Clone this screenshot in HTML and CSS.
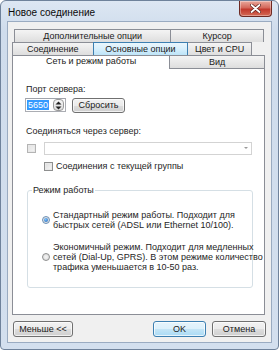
FILE: index.html
```html
<!DOCTYPE html>
<html lang="ru">
<head>
<meta charset="utf-8">
<link rel="stylesheet" href="styles.css">
</head>
<body>
<div class="window">
  <div class="titlebar">
    <span class="title">Новое соединение</span>
    <div class="close">
      <svg width="11" height="9" viewBox="0 0 11 9"><path d="M1.5 1 L9.5 8 M9.5 1 L1.5 8" stroke="#5a1e18" stroke-width="3.2" stroke-linecap="round"/><path d="M1.5 1 L9.5 8 M9.5 1 L1.5 8" stroke="#fff" stroke-width="1.8" stroke-linecap="round"/></svg>
    </div>
  </div>
  <div class="client">
    <div class="tabs">
      <div class="tabrow row1">
        <div class="tab w-t1">Дополнительные опции</div>
        <div class="tab w-t2">Курсор</div>
      </div>
      <div class="tabrow row2">
        <div class="tab w-t3">Соединение</div>
        <div class="tab hover w-t4">Основные опции</div>
        <div class="tab w-t5">Цвет и CPU</div>
      </div>
      <div class="tabrow row3">
        <div class="tab selected w-t6">Сеть и режим работы</div>
        <div class="tab w-t7">Вид</div>
      </div>
    </div>
    <div class="panel">
      <div class="label">Порт сервера:</div>
      <div class="portrow">
        <div class="spinedit">
          <span class="seltext">5650</span>
          <div class="spin">
            <svg width="9" height="11" viewBox="0 0 9 11"><path d="M4.5 1.5 L7.5 4.5 L1.5 4.5 Z" fill="#222"/><path d="M1.5 6.5 L7.5 6.5 L4.5 9.5 Z" fill="#222"/></svg>
          </div>
        </div>
        <div class="btn reset">Сбросить</div>
      </div>
      <div class="label label2">Соединяться через сервер:</div>
      <div class="comborow">
        <div class="check disabled"></div>
        <div class="combo"><span class="arrow"></span></div>
      </div>
      <div class="checkrow">
        <div class="check"></div>
        <span>Соединения с текущей группы</span>
      </div>
      <div class="group">
        <span class="legend">Режим работы</span>
        <div class="radiorow">
          <div class="radio checked"><div class="dot"></div></div>
          <div class="rtext">Стандартный режим работы. Подходит для<br>быстрых сетей (ADSL или Ethernet 10/100).</div>
        </div>
        <div class="radiorow second">
          <div class="radio"></div>
          <div class="rtext">Экономичный режим. Подходит для медленных<br>сетей (Dial-Up, GPRS). В этом режиме количество<br>трафика уменьшается в 10-50 раз.</div>
        </div>
      </div>
    </div>
    <div class="buttons">
      <div class="btn less">Меньше &lt;&lt;</div>
      <div class="spacer"></div>
      <div class="btn ok">OK</div>
      <div class="btn cancel">Отмена</div>
    </div>
  </div>
</div>
</body>
</html>
```

FILE: styles.css
```css
* { box-sizing: border-box; }
html, body { margin: 0; padding: 0; background: #fff; }
body { font-family: "Liberation Sans", Arial, sans-serif; font-size: 9px; color: #1e1e1e; }

.window {
  width: 279px; height: 350px;
  border: 1px solid #6f829b;
  border-radius: 6px 6px 4px 4px;
  background: linear-gradient(#dde7f3, #cfdcec 30px, #d3dfee);
  padding: 0 6px 6px 6px;
  display: flex; flex-direction: column;
}
.titlebar {
  height: 20px; display: flex; align-items: flex-start; justify-content: space-between;
}
.title { font-size: 10px; color: #0a0a0a; padding-left: 1px; margin-top: 6px; line-height: 11px; }
.close {
  width: 33px; height: 16px;
  border: 1px solid #6e2a23; border-top: none;
  border-radius: 0 0 4px 4px;
  background: linear-gradient(#e9a99c, #d4685a 45%, #c2392c 55%, #d46a55);
  display: flex; align-items: center; justify-content: center;
  box-shadow: inset 0 0 0 1px rgba(255,255,255,0.35);
}
.client {
  flex: 1;
  border: 1px solid #9aabc1;
  background: #f0f0f0;
  padding: 7px 6px 5px 4px;
  display: flex; flex-direction: column;
}
.tabs { display: flex; flex-direction: column; height: 39px; }
.tabrow { display: flex; height: 13px; }
.row1 { margin-left: 2px; margin-right: 1px; }
.row2 { margin-right: 13px; }
.tab {
  height: 13px; line-height: 12px; text-align: center;
  border: 1px solid #8b8e96; border-bottom: none;
  background: linear-gradient(#f4f4f4, #e9e9e9 50%, #dedede);
  margin-left: -1px; color: #1a1a1a; white-space: nowrap;
}
.tab:first-child { margin-left: 0; }
.tab.hover { background: linear-gradient(#eaf6fd, #d7effc 50%, #bde4f8); border-color: #3c7fb1; position: relative; z-index: 1; }
.tab.selected { background: #fff; height: 14px; line-height: 11px; position: relative; z-index: 2; }
.w-t1 { width: 158px; } .w-t2 { width: 94px; }
.w-t3 { width: 82px; } .w-t4 { width: 96px; } .w-t5 { width: 65px; }
.w-t6 { width: 159px; } .w-t7 { width: 96px; }

.panel {
  height: 247px;
  border: 1px solid #8b8e96;
  background: #fff;
  padding: 15px 12px 0 13px;
  display: flex; flex-direction: column;
}
.label { line-height: 11px; color: #1e1e1e; }
.portrow { display: flex; align-items: flex-start; margin-top: 3px; margin-left: -1px; }
.spinedit {
  width: 41px; height: 14px; border: 1px solid #abadb3; border-top-color: #a0a3aa;
  background: #fff; display: flex; align-items: center; padding-left: 1px;
}
.seltext { background: #3399ff; color: #fff; line-height: 10px; padding: 0 1px; width: 22px; }
.spin {
  margin-left: 4px; width: 11px; height: 12px; border: 1px solid #9a9a9a; border-radius: 4px;
  background: linear-gradient(#f6f6f6, #dcdcdc);
  display: flex; align-items: center; justify-content: center;
}
.btn {
  height: 15px; line-height: 13px; text-align: center;
  border: 1px solid #707070; border-radius: 3px;
  background: linear-gradient(#f2f2f2, #ebebeb 50%, #dddddd 51%, #cfcfcf);
  box-shadow: inset 0 0 0 1px rgba(255,255,255,0.7);
  color: #1a1a1a;
}
.reset { width: 53px; margin-left: 6px; }
.label2 { margin-top: 13px; }
.comborow { display: flex; align-items: center; margin-top: 5px; }
.check {
  width: 9px; height: 9px; border: 1px solid #8e8f8f;
  background: linear-gradient(135deg, #dcdcdc, #f6f6f6);
  box-shadow: inset 0 0 0 1px #e8e8e8;
}
.check.disabled { border-color: #b4b4b4; background: linear-gradient(135deg, #e2e2e2, #f4f4f4); margin-left: 1px; }
.combo {
  width: 208px; height: 13px; margin-left: 8px;
  border: 1px solid #d3d3d3; background: #fff; position: relative;
}
.arrow {
  position: absolute; right: 3px; top: 4px;
  border-left: 2px solid transparent; border-right: 2px solid transparent; border-top: 2px solid #9a9a9a;
}
.checkrow { display: flex; align-items: center; margin-top: 6px; margin-left: 18px; line-height: 11px; }
.checkrow span { margin-left: 3px; }
.group {
  margin-top: 18px; margin-left: 1px; width: 226px; height: 98px;
  border: 1px solid #d5dfe5; border-radius: 3px;
  position: relative; padding: 19px 0 0 14px;
}
.legend {
  position: absolute; left: 4px; top: -6px; background: #fff; padding: 0 1px; line-height: 11px;
}
.radiorow { display: flex; align-items: center; }
.radiorow.second { margin-top: 12px; }
.rtext { line-height: 10px; margin-left: 3px; white-space: nowrap; }
.radio {
  width: 8px; height: 8px; border-radius: 50%; border: 1px solid #8e8f8f;
  background: radial-gradient(#f6f6f6, #d6d6d6);
  display: flex; align-items: center; justify-content: center; flex: none;
}
.radio.checked { border-color: #6b8fb5; }
.dot { width: 4px; height: 4px; border-radius: 50%; background: radial-gradient(circle at 40% 35%, #7fc4ff, #1a5fb4); }

.buttons { display: flex; margin-top: 6px; margin-left: 1px; margin-right: -1px; height: 16px; }
.buttons .btn { height: 16px; line-height: 14px; }
.less { width: 60px; }
.spacer { flex: 1; }
.ok { width: 53px; border-color: #3c7fb1; background: linear-gradient(#e5f4fc, #dcf0fb 50%, #c4e5f6 51%, #a9daf5); }
.cancel { width: 54px; margin-left: 6px; }
```
